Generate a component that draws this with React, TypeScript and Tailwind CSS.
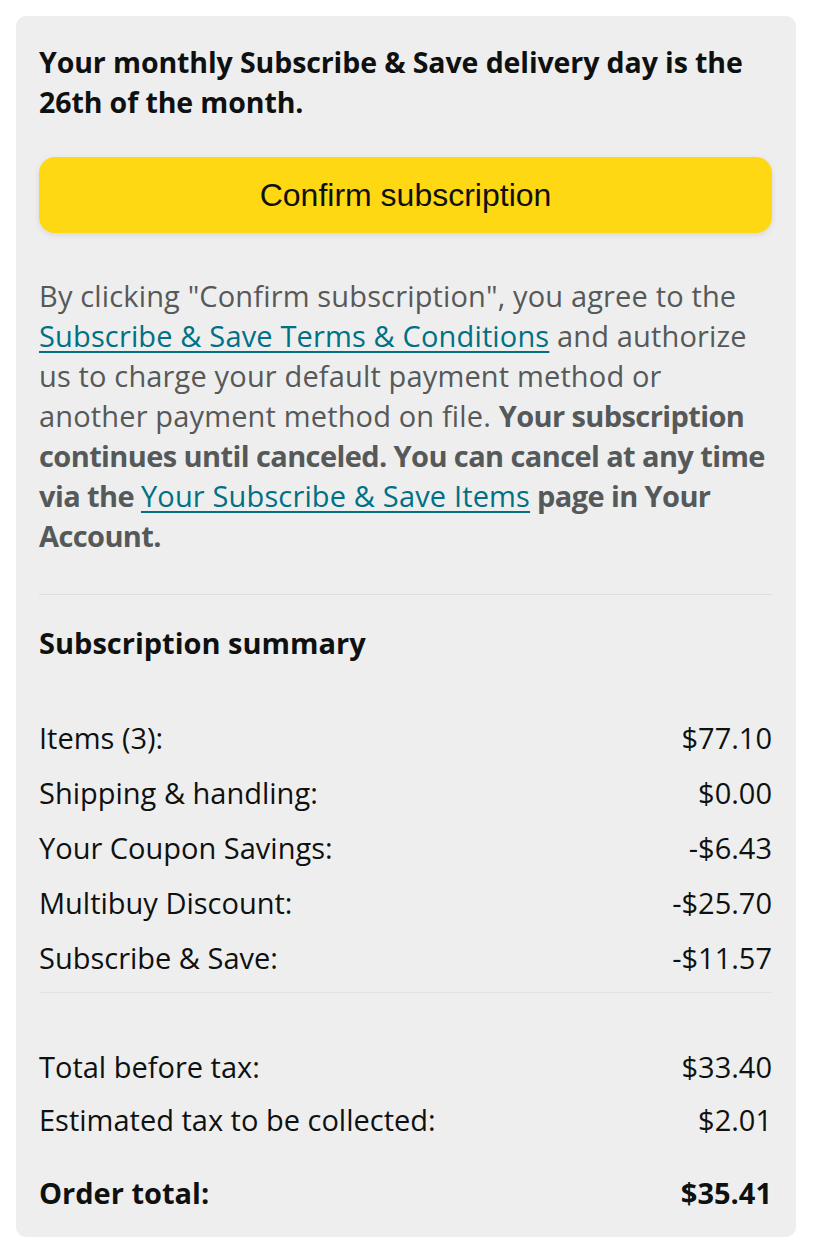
import React from 'react';

const rows = [
  { label: 'Items (3):', value: '$77.10' },
  { label: 'Shipping & handling:', value: '$0.00' },
  { label: 'Your Coupon Savings:', value: '-$6.43' },
  { label: 'Multibuy Discount:', value: '-$25.70' },
  { label: 'Subscribe & Save:', value: '-$11.57' },
];

const App: React.FC = () => {
  return (
    <div className="min-h-screen bg-white pt-4 pl-4 pr-5" style={{ fontFamily: '"Open Sans", Lato, sans-serif' }}>
      <div className="rounded-[10px] bg-[#eeeeee] pl-[23px] pr-6 pt-[26px] pb-6 text-[#0f1111]">
        <h2 className="text-[28.5px] font-bold leading-[40px] tracking-[-0.1px]">
          Your monthly Subscribe &amp; Save delivery day is the 26th of the month.
        </h2>

        <button
          type="button"
          className="mt-[35px] flex h-[76px] w-full items-center justify-center rounded-[16px] bg-[#ffd814] text-[32px] text-[#0f1111] shadow-[0_2px_5px_0_rgba(200,200,200,0.6)]"
          style={{ fontFamily: '"Liberation Sans", Arial, sans-serif' }}
        >
          Confirm subscription
        </button>

        <p className="mt-[43px] text-[29px] leading-[40px] tracking-[0.15px] text-[#565959]">
          By clicking "Confirm subscription", you agree to the{' '}
          <a href="#" className="text-[#007185] underline underline-offset-[4px]">Subscribe &amp; Save Terms &amp; Conditions</a>{' '}
          and authorize us to charge your default payment method or another payment method on file.{' '}
          <span className="font-bold tracking-[-0.6px]">
            Your subscription continues until canceled. You can cancel at any time via the{' '}
            <a href="#" className="font-normal tracking-[0.15px] text-[#007185] underline underline-offset-[4px]">Your Subscribe &amp; Save Items</a>{' '}
            page in Your Account.
          </span>
        </p>

        <hr className="mt-[38px] border-t border-[#dddddd]" />

        <h3 className="mt-[28px] text-[29px] font-bold leading-[40px]">Subscription summary</h3>

        <div className="mt-[55px] flex flex-col gap-[15px]">
          {rows.map((r) => (
            <div key={r.label} className="flex justify-between text-[29px] leading-[40px]">
              <span>{r.label}</span>
              <span>{r.value}</span>
            </div>
          ))}
        </div>

        <hr className="mt-[14px] border-t border-[#e2e2e2]" />

        <div className="mt-[54px] flex flex-col gap-[13px]">
          <div className="flex justify-between text-[29px] leading-[40px]">
            <span>Total before tax:</span>
            <span>$33.40</span>
          </div>
          <div className="flex justify-between text-[29px] leading-[40px]">
            <span>Estimated tax to be collected:</span>
            <span>$2.01</span>
          </div>
        </div>

        <div className="mt-[33px] flex justify-between text-[29px] font-bold leading-[40px]">
          <span>Order total:</span>
          <span>$35.41</span>
        </div>
      </div>
    </div>
  );
};

export default App;
